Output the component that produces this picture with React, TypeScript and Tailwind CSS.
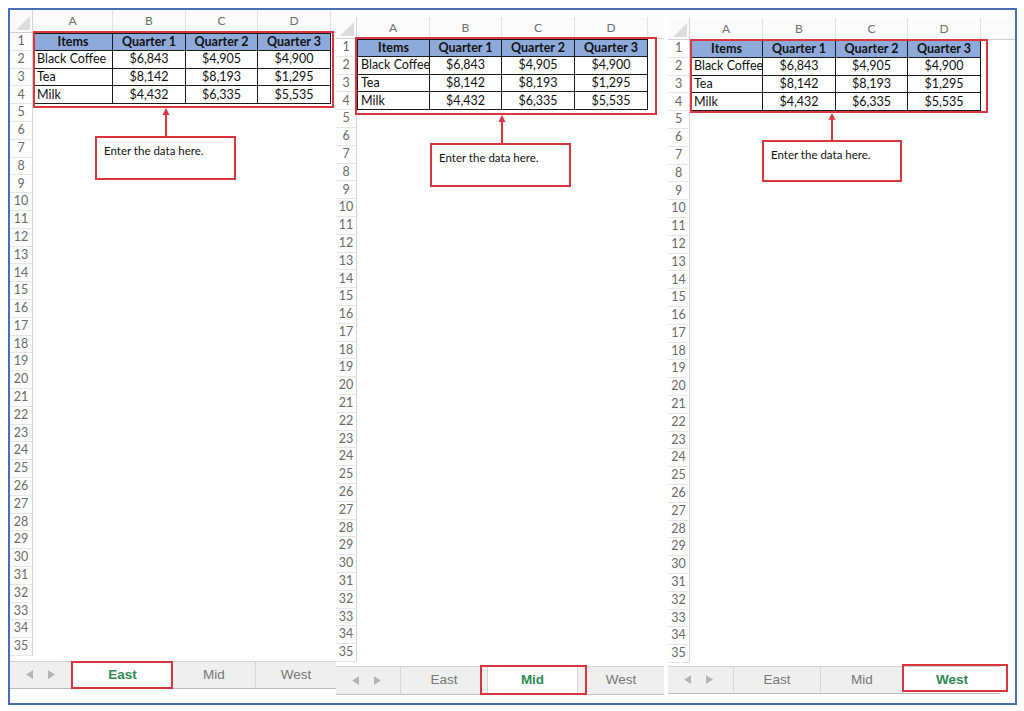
import React from 'react';

type TabName = 'East' | 'Mid' | 'West';

interface PanelConfig {
  width: string;
  padLeft: string;
  top: string;
  headH: string;
  rowHead: string;
  cols: string[];
  filler: string;
  gap: string;
  tabH: string;
  tabBar: string;
  arrows: string;
  tabW: Record<TabName, string>;
  active: TabName;
  redBox: string;
  callout: string;
  arrow: string;
  tabBox: string;
}

const letters = ['A', 'B', 'C', 'D'];
const header = ['Items', 'Quarter 1', 'Quarter 2', 'Quarter 3'];
const data = [
  ['Black Coffee', '$6,843', '$4,905', '$4,900'],
  ['Tea', '$8,142', '$8,193', '$1,295'],
  ['Milk', '$4,432', '$6,335', '$5,535'],
];

const panels: PanelConfig[] = [
  {
    width: 'w-[326px]',
    padLeft: 'pl-0',
    top: 'pt-0',
    headH: 'h-[23px]',
    rowHead: 'w-[23px]',
    cols: ['w-[80px]', 'w-[73px]', 'w-[72px]', 'w-[73px]'],
    filler: 'w-[5px]',
    gap: 'h-[5px]',
    tabH: 'h-[28px]',
    tabBar: 'w-[326px]',
    arrows: 'w-[62px]',
    tabW: { East: 'w-[100px]', Mid: 'w-[83px]', West: 'w-[81px]' },
    active: 'East',
    redBox: 'left-[23px] top-[21px] w-[301px] h-[77px]',
    callout: 'left-[85px] top-[126px] w-[141px] h-[44px]',
    arrow: 'left-[151px] top-[98px] h-[28px]',
    tabBox: 'left-[61px] top-[651px] w-[102px] h-[28px]',
  },
  {
    width: 'w-[328px]',
    padLeft: 'pl-0',
    top: 'pt-[7px]',
    headH: 'h-[22px]',
    rowHead: 'w-[21px]',
    cols: ['w-[73px]', 'w-[72px]', 'w-[73px]', 'w-[73px]'],
    filler: 'w-[16px]',
    gap: 'h-[4px]',
    tabH: 'h-[29px]',
    tabBar: 'w-[328px]',
    arrows: 'w-[64px]',
    tabW: { East: 'w-[87px]', Mid: 'w-[90px]', West: 'w-[87px]' },
    active: 'Mid',
    redBox: 'left-[19px] top-[27px] w-[302px] h-[78px]',
    callout: 'left-[94px] top-[133px] w-[141px] h-[44px]',
    arrow: 'left-[161px] top-[105px] h-[28px]',
    tabBox: 'left-[144px] top-[655px] w-[107px] h-[30px]',
  },
  {
    width: 'w-[351px]',
    padLeft: 'pl-[4px]',
    top: 'pt-[8px]',
    headH: 'h-[22px]',
    rowHead: 'w-[22px]',
    cols: ['w-[73px]', 'w-[73px]', 'w-[72px]', 'w-[73px]'],
    filler: 'w-[17px]',
    gap: 'h-[3px]',
    tabH: 'h-[28px]',
    tabBar: 'w-[332px]',
    arrows: 'w-[65px]',
    tabW: { East: 'w-[87px]', Mid: 'w-[83px]', West: 'w-[97px]' },
    active: 'West',
    redBox: 'left-[26px] top-[29px] w-[298px] h-[74px]',
    callout: 'left-[98px] top-[130px] w-[140px] h-[42px]',
    arrow: 'left-[163px] top-[103px] h-[27px]',
    tabBox: 'left-[238px] top-[654px] w-[106px] h-[28px]',
  },
];

function Corner() {
  return (
    <svg viewBox="0 0 20 20" className="absolute right-[2px] bottom-[2px] w-[14px] h-[14px]">
      <polygon points="20,0 20,20 0,20" fill="#dcdcdc" />
    </svg>
  );
}

function Panel({ cfg }: { cfg: PanelConfig }) {
  const tabs: TabName[] = ['East', 'Mid', 'West'];
  return (
    <div className={`relative shrink-0 h-full ${cfg.width} ${cfg.padLeft} ${cfg.top}`}>
      {/* column headers */}
      <div className={`flex ${cfg.headH} border-b border-[#cfcfcf] bg-[#fbfbfb] text-[12px] text-[#707070]`}>
        <div className={`relative shrink-0 ${cfg.rowHead} border-r border-[#d4d4d4]`}>
          <Corner />
        </div>
        {letters.map((l, i) => (
          <div
            key={l}
            className={`shrink-0 ${cfg.cols[i]} flex items-center justify-center border-r border-[#e2e2e2]`}
          >
            {l}
          </div>
        ))}
        <div className={`shrink-0 ${cfg.filler}`} />
      </div>

      {/* rows */}
      <div className="flex flex-col">
        {Array.from({ length: 35 }, (_, r) => {
          const n = r + 1;
          const cells = n === 1 ? header : n <= 4 ? data[n - 2] : null;
          return (
            <div key={n} className="flex h-[17.8px] text-[12.5px] leading-none">
              <div
                className={`shrink-0 ${cfg.rowHead} flex items-center justify-center border-r border-b border-r-[#d4d4d4] border-b-[#e6e6e6] text-[#6a6a6a]`}
              >
                {n}
              </div>
              {cells &&
                cells.map((c, i) => (
                  <div
                    key={i}
                    className={`shrink-0 ${cfg.cols[i]} flex items-center whitespace-nowrap border-r border-b border-[#1a1a1a] text-[#111] ${
                      n === 1 ? 'border-t bg-[#8eaadb] font-bold justify-center' : i === 0 ? 'pl-[3px] border-l' : 'justify-center'
                    } ${n === 1 && i === 0 ? 'border-l' : ''}`}
                  >
                    {c}
                  </div>
                ))}
            </div>
          );
        })}
      </div>

      <div className={cfg.gap} />

      {/* sheet tabs */}
      <div
        className={`flex ${cfg.tabH} ${cfg.tabBar} bg-[#efefef] border-t border-[#d3d3d3] border-b border-b-[#bcbcbc] font-['Liberation_Sans',Arial,sans-serif] text-[13.5px] text-[#777]`}
      >
        <div className={`shrink-0 ${cfg.arrows} flex items-center gap-[15px] pl-[16px]`}>
          <svg viewBox="0 0 8 10" className="w-[7px] h-[9px]">
            <polygon points="8,0 8,10 0,5" fill="#b4b4b4" />
          </svg>
          <svg viewBox="0 0 8 10" className="w-[7px] h-[9px]">
            <polygon points="0,0 0,10 8,5" fill="#b4b4b4" />
          </svg>
        </div>
        {tabs.map((t) => (
          <div
            key={t}
            className={`shrink-0 ${cfg.tabW[t]} flex items-center justify-center border-l border-[#d6d6d6] ${
              t === cfg.active ? 'bg-white text-[#2e8a52] font-bold' : ''
            }`}
          >
            {t}
          </div>
        ))}
      </div>

      {/* annotations */}
      <div className={`absolute ${cfg.redBox} border-2 border-[#d9363e]`} />
      <div className={`absolute ${cfg.callout} border-2 border-[#d9363e] bg-white pl-[7px] pt-[4px] text-[11.5px] text-[#111]`}>
        Enter the data here.
      </div>
      <svg viewBox="0 0 10 28" preserveAspectRatio="none" className={`absolute ${cfg.arrow} w-[10px]`}>
        <line x1="5" y1="4" x2="5" y2="28" stroke="#d9363e" strokeWidth="2" />
        <polygon points="1.5,7 5,0 8.5,7" fill="#d9363e" />
      </svg>
      <div className={`absolute ${cfg.tabBox} border-2 border-[#d9363e]`} />
    </div>
  );
}

export default function App() {
  return (
    <div className="w-[1024px] h-[711px] bg-white pt-[8px] pl-[8px] font-['Lato','Open_Sans',sans-serif]">
      <div className="w-[1009px] h-[697px] border-2 border-[#4b6db5] flex overflow-hidden">
        {panels.map((p, i) => (
          <Panel key={i} cfg={p} />
        ))}
      </div>
    </div>
  );
}
